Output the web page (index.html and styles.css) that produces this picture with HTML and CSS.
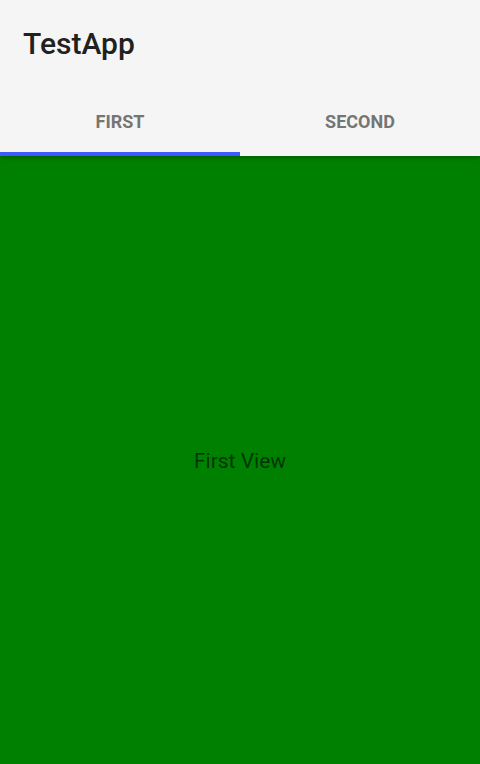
FILE: index.html
```html
<!DOCTYPE html>
<html>
<head>
<meta charset="utf-8">
<link rel="stylesheet" href="styles.css">
</head>
<body>
<div class="app">
  <header class="appbar">
    <div class="toolbar"><h1 class="title">TestApp</h1></div>
    <nav class="tabs">
      <div class="tab active">First</div>
      <div class="tab">Second</div>
    </nav>
  </header>
  <main class="view">
    <span class="view-text">First View</span>
  </main>
</div>
</body>
</html>
```
FILE: styles.css
```css
html, body { margin: 0; padding: 0; height: 100%; }
body { font-family: Roboto, "Noto Sans", sans-serif; }
.app { display: flex; flex-direction: column; height: 764px; }
.appbar { background: #f5f5f5; box-shadow: 0 2px 4px rgba(0,0,0,0.25); position: relative; z-index: 1; }
.toolbar { height: 86px; display: flex; align-items: center; padding: 0 24px; }
.title { margin: 0 0 0 -1px; font-size: 30px; font-weight: 500; color: #212121; }
.tabs { display: flex; height: 70px; }
.tab { flex: 1; display: flex; align-items: center; justify-content: center; text-transform: uppercase; font-size: 18px; font-weight: 700; color: #757575; box-sizing: border-box; padding-top: 4px; border-bottom: 4px solid transparent; }
.tab.active { border-bottom-color: #3d5afe; }
.view { flex: 1; background: #008000; display: flex; align-items: center; justify-content: center; }
.view-text { font-size: 21px; color: rgba(0,0,0,0.6); padding-top: 2px; }
```
